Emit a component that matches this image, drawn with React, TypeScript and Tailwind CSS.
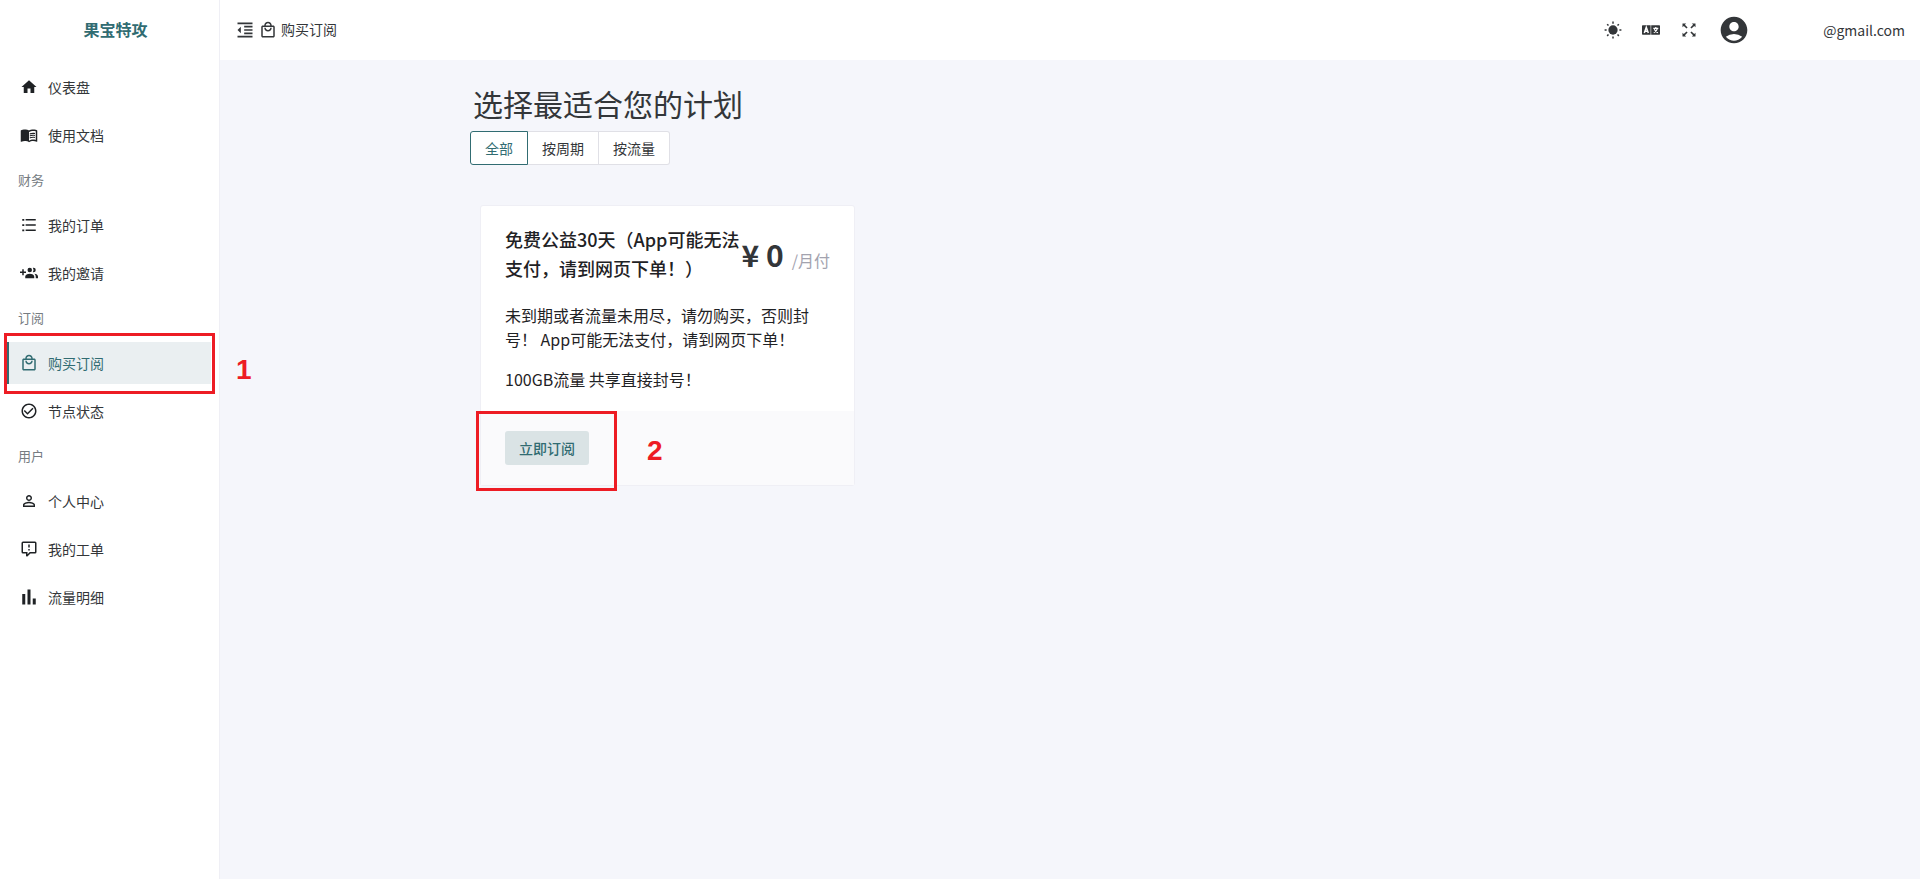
import React from 'react';
import {
  MdHome,
  MdMenuBook,
  MdOutlineLocalMall,
  MdCheckCircleOutline,
  MdPersonOutline,
  MdFormatIndentDecrease,
  MdAccountCircle,
} from 'react-icons/md';

interface IconProps {
  className?: string;
}

interface MenuItem {
  label: string;
  icon: React.ComponentType<IconProps>;
  active?: boolean;
}

interface MenuGroup {
  title?: string;
  items: MenuItem[];
}

function ListIcon({ className }: IconProps) {
  return (
    <svg viewBox="0 0 24 24" fill="currentColor" className={className} aria-hidden="true">
      <path d="M3 4h2.700v2.400H3zM7.500 4H21v2H7.500zM3 11h2.700v2.400H3zM7.500 11H21v2H7.500zM3 18h2.700v2.400H3zM7.500 18H21v2H7.500z" />
    </svg>
  );
}

function InviteIcon({ className }: IconProps) {
  return (
    <svg viewBox="0 0 24 24" fill="currentColor" className={className} aria-hidden="true">
      <path d="M19 17v2H7v-2s0-4 6-4 6 4 6 4m-3-9a3 3 0 1 0-3 3 3 3 0 0 0 3-3m3.200 5.060A5.600 5.600 0 0 1 21 17v2h3v-2s0-3.450-4.800-3.940M18 5a2.910 2.910 0 0 0-.890.140 5 5 0 0 1 0 5.720A2.910 2.910 0 0 0 18 11a3 3 0 0 0 0-6M8 10H5V7H3v3H0v2h3v3h2v-3h3z" />
    </svg>
  );
}

function TicketIcon({ className }: IconProps) {
  return (
    <svg viewBox="0 0 24 24" fill="currentColor" className={className} aria-hidden="true">
      <path d="M9 22a1 1 0 0 1-1-1v-3H4a2 2 0 0 1-2-2V4a2 2 0 0 1 2-2h16a2 2 0 0 1 2 2v12a2 2 0 0 1-2 2h-6.100l-3.700 3.710c-.2.190-.450.290-.7.290H9m1-6v3.080L13.080 16H20V4H4v12h6m3-6h-2V6h2v4m0 4h-2v-2h2v2z" />
    </svg>
  );
}

function PollIcon({ className }: IconProps) {
  return (
    <svg viewBox="0 0 24 24" fill="currentColor" className={className} aria-hidden="true">
      <path d="M3 22V8h4v14zM10 22V2h4v20zM17 22v-8h4v8z" />
    </svg>
  );
}

function SunIcon({ className }: IconProps) {
  return (
    <svg viewBox="0 0 24 24" fill="currentColor" className={className} aria-hidden="true">
      <circle cx="12" cy="12" r="6.200" />
      <path d="M11 .8h2v2.700h-2zM11 20.500h2v2.700h-2zM.8 11h2.700v2H.8zM20.500 11h2.700v2h-2.700zM3.500 4.900l1.400-1.400 1.800 1.800-1.400 1.400zM17.300 18.700l1.400-1.400 1.800 1.800-1.400 1.400zM19.100 3.500l1.400 1.400-1.800 1.800-1.400-1.400zM5.300 17.300l1.400 1.400-1.800 1.800-1.400-1.400z" />
    </svg>
  );
}

function LanguageIcon({ className }: IconProps) {
  return (
    <svg viewBox="0 0 18 18" fill="none" className={className} aria-hidden="true">
      <path d="M0 5a.7.7 0 0 1 .7-.7h7.900v9.400H.7A.7.7 0 0 1 0 13zM9.200 4.300h8.100a.7.7 0 0 1 .7.7v8a.7.7 0 0 1-.7.7H9.200z" fill="currentColor" />
      <path d="M2.300 11.900 4.300 6.300l2 5.600M3 10.200h2.600" stroke="#fff" strokeWidth="1.500" />
      <path d="M11.300 7.300h5M13.800 6v1.300M11.800 11.700c2-.8 3.200-2.200 3.600-4.300M12.300 8.200c.5 1.700 1.800 2.900 3.700 3.500" stroke="#fff" strokeWidth="1.200" />
    </svg>
  );
}

function ExpandIcon({ className }: IconProps) {
  return (
    <svg viewBox="0 0 18 18" fill="currentColor" className={className} aria-hidden="true">
      <path d="M2.500 2.500h3.700L4.900 3.800l2.700 2.700-1.100 1.100-2.700-2.700-1.300 1.300zM15.500 2.500v3.700l-1.300-1.300-2.700 2.700-1.100-1.100 2.700-2.700-1.300-1.300zM2.500 15.500v-3.700l1.300 1.300 2.700-2.700 1.100 1.100-2.700 2.700 1.300 1.300zM15.500 15.500h-3.700l1.300-1.300-2.700-2.700 1.100-1.100 2.700 2.700 1.300-1.300z" />
    </svg>
  );
}

const menu: MenuGroup[] = [
  {
    items: [
      { label: '仪表盘', icon: MdHome },
      { label: '使用文档', icon: MdMenuBook },
    ],
  },
  {
    title: '财务',
    items: [
      { label: '我的订单', icon: ListIcon },
      { label: '我的邀请', icon: InviteIcon },
    ],
  },
  {
    title: '订阅',
    items: [
      { label: '购买订阅', icon: MdOutlineLocalMall, active: true },
      { label: '节点状态', icon: MdCheckCircleOutline },
    ],
  },
  {
    title: '用户',
    items: [
      { label: '个人中心', icon: MdPersonOutline },
      { label: '我的工单', icon: TicketIcon },
      { label: '流量明细', icon: PollIcon },
    ],
  },
];

function SidebarItem({ item }: { item: MenuItem }) {
  const Icon = item.icon;
  if (item.active) {
    return (
      <div className="relative">
        <a href="#" aria-current="page" className="ml-1.5 mr-2 flex h-[42px] items-center gap-2.5 border-l-3 border-[#316c72] bg-[#eaeff1] pl-[11px] text-[#316c72]">
          <Icon className="size-[18px]" />
          {item.label}
        </a>
        {/* step 1 marker */}
        <div className="pointer-events-none absolute -bottom-2.5 -top-[9px] left-1 right-1 border-3 border-[#ed1c24]" />
        <span className="absolute left-[236px] top-2.5 font-['Liberation_Sans',sans-serif] text-[28px]/[36px] font-bold text-[#ed1c24]">1</span>
      </div>
    );
  }
  return (
    <a href="#" className="flex h-[42px] items-center gap-2.5 pl-5">
      <Icon className="size-[18px] text-[#1f2225]" />
      {item.label}
    </a>
  );
}

function Sidebar() {
  return (
    <aside className="w-[220px] shrink-0 border-r border-[#efeff5] bg-white">
      <h2 className="flex h-[60px] items-center justify-center pb-0.5 pl-3 text-base font-bold text-[#316c72]">果宝特攻</h2>
      <nav className="flex flex-col gap-1.5 pt-1.5">
        {menu.map((group, index) => (
          <React.Fragment key={index}>
            {group.title && <h3 className="flex h-9 items-center pl-[18px] text-[13px] text-[#767c82]">{group.title}</h3>}
            {group.items.map((item) => (
              <SidebarItem key={item.label} item={item} />
            ))}
          </React.Fragment>
        ))}
      </nav>
    </aside>
  );
}

function Header() {
  return (
    <header className="flex h-[60px] items-center justify-between bg-white px-[15px]">
      <div className="flex items-center">
        <button type="button" aria-label="收起菜单" className="mr-1">
          <MdFormatIndentDecrease className="size-5" />
        </button>
        <MdOutlineLocalMall className="mr-1 size-[18px]" />
        <span className="pb-0.5">购买订阅</span>
      </div>
      <div className="flex items-center">
        <button type="button" aria-label="主题" className="mr-5">
          <SunIcon className="size-[18px]" />
        </button>
        <button type="button" aria-label="语言" className="mr-5">
          <LanguageIcon className="size-[18px]" />
        </button>
        <button type="button" aria-label="全屏" className="mr-5">
          <ExpandIcon className="size-[18px]" />
        </button>
        <MdAccountCircle className="mr-[73px] size-8" />
        <span>@gmail.com</span>
      </div>
    </header>
  );
}

function PlanCard() {
  return (
    <article className="relative w-[375px] rounded-[3px] border border-[#efeff5] bg-white">
      <div className="px-6 pb-5 pt-[19px] text-[#1f2225]">
        <div className="flex items-center justify-between">
          <h2 className="flex-1 text-lg/[29px] font-medium">免费公益30天（App可能无法支付，请到网页下单！）</h2>
          <div className="flex shrink-0 items-baseline whitespace-nowrap text-[#333639]">
            <span className="text-[30px]/[40px] font-bold">¥ 0</span>
            <span className="ml-2 text-base text-[#a3a3af]">/月付</span>
          </div>
        </div>
        <p className="mt-5 text-base/6">未到期或者流量未用尽，请勿购买，否则封号！ App可能无法支付，请到网页下单！</p>
        <p className="mt-4 text-base/6">100GB流量 共享直接封号！</p>
      </div>
      <div className="relative bg-[#fafafc] px-6 py-5">
        <button type="button" className="block h-[34px] rounded-[3px] bg-[#dae3e5] px-3.5 font-medium text-[#316c72]">
          立即订阅
        </button>
        {/* step 2 marker */}
        <div className="pointer-events-none absolute -bottom-1.5 -left-[5px] top-0 w-[141px] border-3 border-[#ed1c24]" />
        <span className="absolute left-[166px] top-[22px] font-['Liberation_Sans',sans-serif] text-[28px]/[36px] font-bold text-[#ed1c24]">2</span>
      </div>
    </article>
  );
}

export default function App() {
  return (
    <div className="flex min-h-screen bg-[#f5f6fb] font-['Noto_Sans_CJK_SC',sans-serif] text-sm text-[#333639]">
      <Sidebar />
      <div className="min-w-0 flex-1">
        <Header />
        <main className="mx-auto max-w-[1200px] pt-[23px]">
          <h1 className="pl-[3px] text-[30px]/[40px]">选择最适合您的计划</h1>
          <div className="mt-2 flex">
            <button type="button" aria-pressed="true" className="h-[34px] rounded-l-[3px] border border-[#316c72] bg-white px-3.5 text-[#316c72]">
              全部
            </button>
            <button type="button" className="h-[34px] border-y border-r border-[#e0e0e6] bg-white px-3.5">
              按周期
            </button>
            <button type="button" className="h-[34px] rounded-r-[3px] border-y border-r border-[#e0e0e6] bg-white px-3.5">
              按流量
            </button>
          </div>
          <div className="mt-10 px-2.5">
            <PlanCard />
          </div>
        </main>
      </div>
    </div>
  );
}
